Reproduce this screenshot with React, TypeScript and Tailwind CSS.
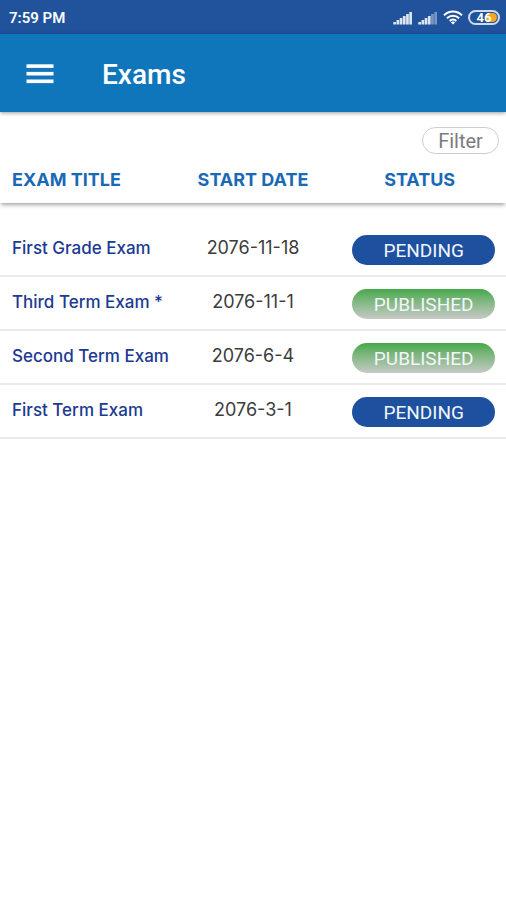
type Status = 'PENDING' | 'PUBLISHED';

interface Exam {
  title: string;
  startDate: string;
  status: Status;
}

const exams: Exam[] = [
  { title: 'First Grade Exam', startDate: '2076-11-18', status: 'PENDING' },
  { title: 'Third Term Exam *', startDate: '2076-11-1', status: 'PUBLISHED' },
  { title: 'Second Term Exam', startDate: '2076-6-4', status: 'PUBLISHED' },
  { title: 'First Term Exam', startDate: '2076-3-1', status: 'PENDING' },
];

const statusStyles: Record<Status, string> = {
  PENDING: 'bg-[#1d519f]',
  PUBLISHED: 'bg-linear-to-b from-[#43a849] to-[#c6c9c6]',
};

function SignalIcon({ level }: { level: number }) {
  return (
    <svg width="20" height="14" viewBox="0 0 20 14" fill="#fff" aria-hidden="true">
      {[0, 1, 2, 3, 4, 5].map((i) => (
        <rect
          key={i}
          x={0.3 + i * 3.2}
          y={11 - i * 2}
          width="2.7"
          height={2.5 + i * 2}
          opacity={i < level ? 0.85 : 0.4}
        />
      ))}
    </svg>
  );
}

function WifiIcon() {
  return (
    <svg width="20" height="15" viewBox="0 0 20 15" fill="none" stroke="#fff" strokeWidth="2" aria-hidden="true">
      <path d="M1 5.4C6 .2 14 .2 19 5.4" />
      <path d="M3.9 8.3c3.4-3.5 8.8-3.5 12.2 0" />
      <path d="M6.7 11c1.9-1.9 4.7-1.9 6.6 0" />
      <path d="M10 14.6 7.9 12.4c1.2-1.1 3-1.1 4.2 0z" fill="#fff" stroke="none" />
    </svg>
  );
}

function Battery({ percent }: { percent: number }) {
  return (
    <div className="relative flex h-[15px] w-8 items-center justify-center rounded-full border-2 border-[#cfdcf0]">
      <span className="absolute right-px h-[9px] w-[11px] rounded-full bg-[#f5a623]" />
      <span className="relative text-[13px] leading-none font-bold">{percent}</span>
    </div>
  );
}

function StatusBar() {
  return (
    <div className="flex h-[34px] items-center justify-between bg-[#21529c] pt-px pr-[6px] pl-[9px] text-white">
      <span className="text-[15px] leading-5 font-semibold">7:59 PM</span>
      <div className="flex items-center gap-[5px]">
        <SignalIcon level={6} />
        <SignalIcon level={4} />
        <WifiIcon />
        <Battery percent={46} />
      </div>
    </div>
  );
}

export default function App() {
  return (
    <div className="min-h-screen bg-white font-[Roboto,sans-serif]">
      <StatusBar />

      <header className="flex h-[78px] items-center bg-[#1076bc] pt-0.5 pl-[26px] text-white shadow-[0_1px_4px_rgba(0,0,0,0.4)]">
        <button type="button" aria-label="Menu" className="mr-12">
          <svg width="28" height="20" viewBox="0 0 28 20" fill="#fff" aria-hidden="true">
            <rect x="0.5" y="0.3" width="27" height="3.6" />
            <rect x="0.5" y="7.9" width="27" height="3.6" />
            <rect x="0.5" y="15.5" width="27" height="3.6" />
          </svg>
        </button>
        <h1 className="pt-0.5 text-[28px] leading-8 font-medium">Exams</h1>
      </header>

      <div className="flex justify-end pt-[15px] pr-[7px]">
        <button
          type="button"
          className="flex h-[27px] w-[77px] items-center justify-center rounded-full border border-[#cdcdcd] text-[20px] leading-6 text-[#7c7c7c]"
        >
          Filter
        </button>
      </div>

      <table className="w-full table-fixed border-separate border-spacing-0 font-[Inter,sans-serif]">
        <thead>
          <tr className="h-[49px] text-[18px] leading-6 text-[#1a69b5] shadow-[0_3px_4px_-1px_rgba(0,0,0,0.35)]">
            <th className="pt-0.5 pl-3 text-left font-bold whitespace-nowrap">EXAM TITLE</th>
            <th className="pt-0.5 text-center font-bold whitespace-nowrap">START DATE</th>
            <th className="pt-0.5 pr-1 text-center font-bold">STATUS</th>
          </tr>
        </thead>
        <tbody className="before:block before:h-5">
          {exams.map((exam) => (
            <tr key={exam.title} className="leading-6">
              <td className="border-b-2 border-[#ebebeb] pb-0.5 pl-3 text-[17px] font-medium whitespace-nowrap text-[#1c3a92]">
                {exam.title}
              </td>
              <td className="border-b-2 border-[#ebebeb] pb-0.5 text-center text-[18px] text-[#3c3c3c]">
                {exam.startDate}
              </td>
              <td className="border-b-2 border-[#ebebeb] pt-3 pr-[11px] pb-[10px] pl-[15px]">
                <span
                  className={`flex h-[30px] items-center justify-center rounded-full pt-0.5 font-[Roboto,sans-serif] text-[19px] text-[#f2f6fb] ${statusStyles[exam.status]}`}
                >
                  {exam.status}
                </span>
              </td>
            </tr>
          ))}
        </tbody>
      </table>
    </div>
  );
}
